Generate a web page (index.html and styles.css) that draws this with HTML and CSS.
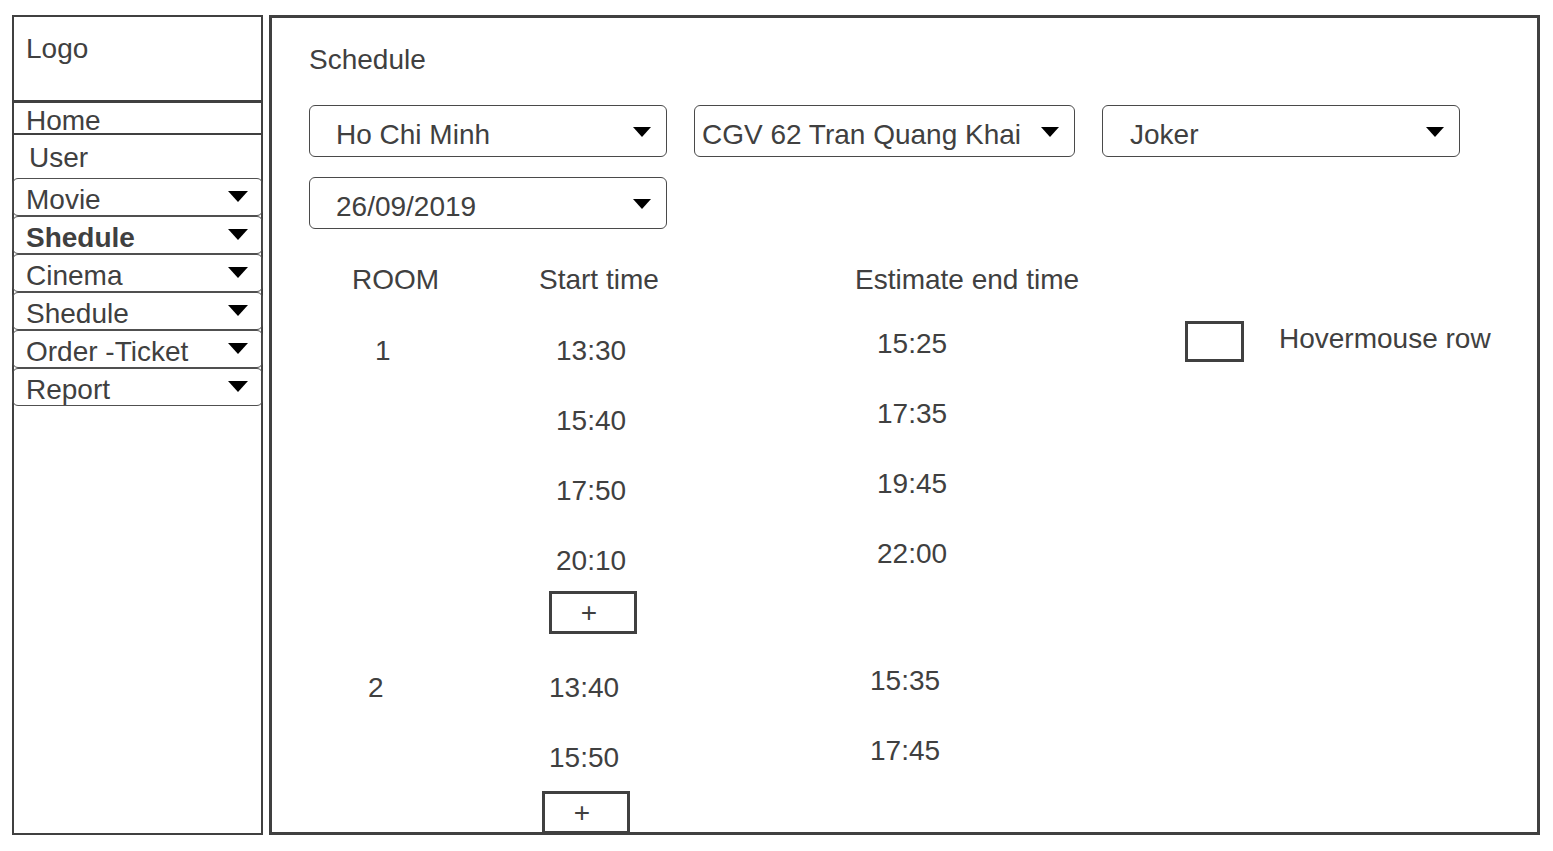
FILE: index.html
```html
<!DOCTYPE html>
<html lang="en">
<head>
<meta charset="utf-8">
<title>Schedule</title>
<link rel="stylesheet" href="styles.css">
</head>
<body>
<div class="app">
  <aside class="sidebar">
    <div class="logo">Logo</div>
    <div class="home">Home</div>
    <div class="user">User</div>
    <nav class="nav">
      <div class="nav-item"><span>Movie</span><i class="tri"></i></div>
      <div class="nav-item is-active"><span>Shedule</span><i class="tri"></i></div>
      <div class="nav-item"><span>Cinema</span><i class="tri"></i></div>
      <div class="nav-item"><span>Shedule</span><i class="tri"></i></div>
      <div class="nav-item"><span>Order -Ticket</span><i class="tri"></i></div>
      <div class="nav-item"><span>Report</span><i class="tri"></i></div>
    </nav>
  </aside>

  <main class="main">
    <h1 class="title">Schedule</h1>

    <div class="filters">
      <div class="select"><span>Ho Chi Minh</span><i class="tri tri-sm"></i></div>
      <div class="select select-wide select-tight"><span>CGV 62 Tran Quang Khai</span><i class="tri tri-sm"></i></div>
      <div class="select select-loose"><span>Joker</span><i class="tri tri-sm"></i></div>
    </div>
    <div class="filters filters-second">
      <div class="select"><span>26/09/2019</span><i class="tri tri-sm"></i></div>
    </div>

    <section class="schedule">
      <div class="table">
        <div class="thead">
          <div>ROOM</div>
          <div>Start time</div>
          <div>Estimate end time</div>
        </div>

        <div class="group">
          <div class="slot"><div class="room">1</div><div class="start">13:30</div><div class="end">15:25</div></div>
          <div class="slot"><div class="room"></div><div class="start">15:40</div><div class="end">17:35</div></div>
          <div class="slot"><div class="room"></div><div class="start">17:50</div><div class="end">19:45</div></div>
          <div class="slot"><div class="room"></div><div class="start">20:10</div><div class="end">22:00</div></div>
          <button class="add" type="button">+</button>
        </div>

        <div class="group group-shift">
          <div class="slot"><div class="room">2</div><div class="start">13:40</div><div class="end">15:35</div></div>
          <div class="slot"><div class="room"></div><div class="start">15:50</div><div class="end">17:45</div></div>
          <button class="add" type="button">+</button>
        </div>
      </div>

      <div class="legend">
        <div class="legend-box"></div>
        <div class="legend-text">Hovermouse row</div>
      </div>
    </section>
  </main>
</div>
</body>
</html>
```

FILE: styles.css
```css
* {
  box-sizing: border-box;
}

body {
  margin: 0;
  padding: 15px 0 0 12px;
  background: #ffffff;
  color: #404040;
  font-family: "Liberation Sans", Arial, sans-serif;
  font-size: 28px;
  line-height: 31px;
}

.app {
  display: flex;
  gap: 6px;
  height: 820px;
}

/* ---------- sidebar ---------- */
.sidebar {
  width: 251px;
  border: 2px solid #404040;
}

.logo {
  height: 86px;
  padding: 16px 0 0 12px;
  border-bottom: 3px solid #404040;
}

.home {
  height: 32px;
  padding: 2px 0 0 12px;
  border-bottom: 2px solid #404040;
}

.user {
  height: 43px;
  padding: 7px 0 0 15px;
}

.nav {
  margin: 0 -2px;
}

.nav-item {
  display: flex;
  justify-content: space-between;
  align-items: flex-start;
  height: 38px;
  padding: 5px 14px 0 13px;
  border: 1px solid #505050;
  border-radius: 6px;
}

.nav-item.is-active {
  font-weight: bold;
}

.tri {
  display: block;
  width: 0;
  height: 0;
  margin-top: 7px;
  border-left: 10px solid transparent;
  border-right: 10px solid transparent;
  border-top: 11px solid #000000;
}

/* ---------- main ---------- */
.main {
  width: 1271px;
  border: 3px solid #404040;
  padding: 26px 0 0 37px;
  overflow: hidden;
}

.title {
  margin: 0;
  font-size: inherit;
  font-weight: normal;
}

.filters {
  display: flex;
  gap: 27px;
  margin-top: 30px;
}

.filters-second {
  margin-top: 20px;
}

.select {
  display: flex;
  justify-content: space-between;
  align-items: flex-start;
  width: 358px;
  height: 52px;
  padding: 13px 15px 0 26px;
  border: 1px solid #4a4a4a;
  border-radius: 6px;
}

.select .tri-sm {
  margin-top: 8px;
}

.select-wide {
  width: 381px;
}

.select-tight {
  padding-left: 7px;
}

.select-loose {
  padding-left: 27px;
}

.tri-sm {
  border-left-width: 9px;
  border-right-width: 9px;
  border-top-width: 10px;
}

.schedule {
  display: flex;
  align-items: flex-start;
  margin-top: 35px;
  padding-left: 43px;
}

.table {
  width: 832.5px;
}

.thead,
.slot {
  display: grid;
  grid-template-columns: 187px 316px 1fr;
}

.thead {
  margin-bottom: 33px;
}

.group {
  display: flex;
  flex-direction: column;
  align-items: flex-start;
}

.group + .group {
  margin-top: 31px;
}

.group-shift {
  margin-left: -7px;
}

.slot {
  width: 100%;
}

.slot + .slot {
  margin-top: 32px;
}

.room {
  padding: 7px 0 0 23px;
}

.start {
  padding: 7px 0 0 17px;
}

.end {
  padding: 0 0 0 22px;
}

.add {
  display: block;
  width: 88px;
  height: 43px;
  margin: 15px 0 0 196.5px;
  padding: 0 7px 0 0;
  border: 3px solid #404040;
  background: #ffffff;
  color: #404040;
  font: inherit;
  line-height: 37px;
  text-align: center;
}

.group-shift .add {
  margin-top: 18px;
}

.legend {
  display: flex;
  align-items: flex-start;
  gap: 35.5px;
  margin-top: 57px;
}

.legend-box {
  width: 59px;
  height: 41px;
  border: 3px solid #404040;
}

.legend-text {
  padding-top: 2px;
}
```
